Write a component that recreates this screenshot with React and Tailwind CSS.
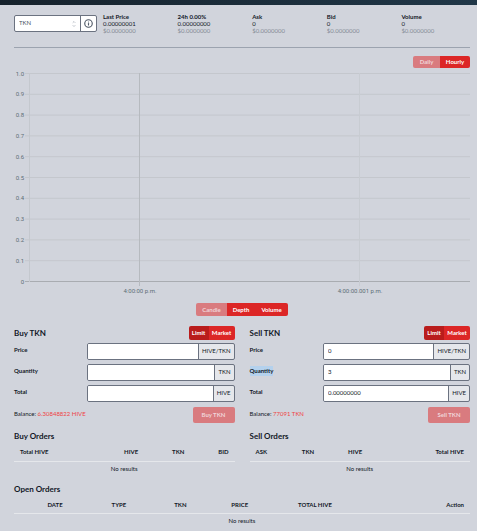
import React, { useState } from 'react';
import { ChevronDown, ChevronUp, Info } from 'lucide-react';

const stats = [
  { label: 'Last Price', value: '0.00000001', usd: '$0.0000000' },
  { label: '24h 0.00%', value: '0.00000000', usd: '$0.0000000' },
  { label: 'Ask', value: '0', usd: '$0.0000000' },
  { label: 'Bid', value: '0', usd: '$0.0000000' },
  { label: 'Volume', value: '0', usd: '$0.0000000' },
];

const yTicks = ['1.0', '0.9', '0.8', '0.7', '0.6', '0.5', '0.4', '0.3', '0.2', '0.1', '0'];

const Chart = () => (
  <svg viewBox="0 0 456 228" className="block h-auto w-full" role="img" aria-label="Market depth">
    {yTicks.map((tick, i) => {
      const y = 5.5 + i * 20.8;
      return (
        <g key={tick}>
          <line x1="11" x2="456" y1={y} y2={y} stroke={tick === '0' ? '#a9acb1' : '#c4c7cd'} />
          <text x="10" y={y + 2} textAnchor="end" fill="#5d6e76" className="font-['Roboto',sans-serif] text-[6px]">{tick}</text>
        </g>
      );
    })}
    <line x1="15.5" x2="15.5" y1="5" y2="214" stroke="#c4c8ce" />
    <line x1="125.5" x2="125.5" y1="5" y2="218" stroke="#b6babf" />
    <line x1="345.5" x2="345.5" y1="5" y2="218" stroke="#c8ccd2" />
    <text x="126" y="225" textAnchor="middle" fill="#5d6e76" className="font-['Roboto',sans-serif] text-[6px]">4:00:00 p.m.</text>
    <text x="346" y="225" textAnchor="middle" fill="#5d6e76" className="font-['Roboto',sans-serif] text-[6px]">4:00:00.001 p.m.</text>
  </svg>
);

const Field = ({ id, label, unit, value, selected }) => (
  <div className="flex h-[17px] items-stretch">
    <div className="w-1/3 pt-[2px]">
      <label htmlFor={id} className={`inline-block h-[10px] font-bold leading-[10px] ${selected ? 'bg-[#b4d1ed]' : ''}`}>{label}</label>
    </div>
    <div className="flex min-w-0 flex-1 overflow-hidden rounded-[2px] border border-[#6b7280] bg-[#e5e7eb]">
      <input id={id} type="text" defaultValue={value} className="min-w-0 flex-1 border-r border-[#6b7280] bg-white px-1 pb-[2px] outline-none" />
      <span className="px-[3px] leading-[13px]">{unit}</span>
    </div>
  </div>
);

const OrderForm = ({ side, balance, price, quantity, total, selected }) => {
  const key = side.toLowerCase();
  return (
    <form className="text-[6px]" onSubmit={e => e.preventDefault()}>
      <div className="flex h-[14px] items-center justify-between">
        <h2 className="text-[8px] font-bold leading-[14px]">{side} TKN</h2>
        <div className="flex h-[14px] overflow-hidden rounded-[2px] font-bold text-white">
          <button type="button" className="w-5 bg-[#b91c1c] pb-px">Limit</button>
          <button type="button" className="w-[26px] bg-[#dc2626] pb-px">Market</button>
        </div>
      </div>
      <div className="mt-[3px] flex flex-col gap-1">
        <Field id={`${key}-price`} label="Price" unit="HIVE/TKN" value={price} />
        <Field id={`${key}-quantity`} label="Quantity" unit="TKN" value={quantity} selected={selected} />
        <Field id={`${key}-total`} label="Total" unit="HIVE" value={total} />
      </div>
      <div className="mt-[5px] flex h-4 justify-between">
        <p className="leading-[14px]">Balance: <a href="#balance" className="text-[#ef4444]">{balance}</a></p>
        <button type="submit" disabled className="w-[42px] rounded-[2px] bg-[#d97b7f] pb-px font-bold text-[#f0d5d9]">{side} TKN</button>
      </div>
    </form>
  );
};

const OrderTable = ({ title, columns }) => (
  <section className="text-[6px]">
    <h2 className="text-[8px] font-bold leading-[12px]">{title}</h2>
    <table className="w-full table-fixed">
      <thead>
        <tr className="h-[19px] border-b border-[#e5e7eb]">
          {columns.map(([name, style]) => (
            <th key={name} className={`whitespace-nowrap px-[6px] pb-0 pt-[2px] font-bold leading-[16px] ${style}`}>{name}</th>
          ))}
        </tr>
      </thead>
      <tbody>
        <tr>
          <td colSpan={columns.length} className="p-0 text-center leading-[13px]">No results</td>
        </tr>
      </tbody>
    </table>
  </section>
);

const buyColumns = [
  ['Total HIVE', 'text-left'],
  ['HIVE', 'w-[21%] text-right'],
  ['TKN', 'w-[21%] text-right'],
  ['BID', 'w-[20%] text-right'],
];

const sellColumns = [
  ['ASK', 'w-[21%] text-left'],
  ['TKN', 'w-[21%] text-left'],
  ['HIVE', 'w-[21%] text-left'],
  ['Total HIVE', 'text-right'],
];

const openColumns = [
  ['DATE', 'w-[18%] text-center'],
  ['TYPE', 'w-[10%] text-center'],
  ['TKN', 'w-[17%] text-center'],
  ['PRICE', 'w-[9%] text-center'],
  ['TOTAL HIVE', 'w-[24%] text-center'],
  ['Action', 'text-right'],
];

const App = () => {
  const [token, setToken] = useState('TKN');

  return (
    <div className="min-h-screen bg-[#d1d4dc] font-['Lato',sans-serif] text-[#111827]">
      <header className="h-[5px] bg-linear-to-r from-[#16222c] to-[#203748]" />
      <main className="pl-[14px] pr-[7px] pt-[8px]">
        <div className="flex h-[35px] gap-[6px] border-b border-[#9ca3af]">
          <div className="mt-[2px] flex h-[17px] w-[83px] shrink-0 overflow-hidden rounded-[2px] border border-[#6b7280] bg-white">
            <div className="relative flex-1">
              <select
                aria-label="Token"
                value={token}
                onChange={e => setToken(e.target.value)}
                className="block h-[13px] w-full appearance-none px-1 py-0 text-[6px] leading-[13px] text-[#4b5563] outline-none"
              >
                <option>TKN</option>
              </select>
              <span className="pointer-events-none absolute inset-y-0 right-1 flex flex-col justify-center text-[#9ca3af]">
                <ChevronUp size={4} strokeWidth={4} />
                <ChevronDown size={4} strokeWidth={4} />
              </span>
            </div>
            <button type="button" aria-label="Token info" className="flex w-4 items-center justify-center border-l border-[#6b7280] text-[#4b5563]">
              <Info size={9} strokeWidth={3} />
            </button>
          </div>
          <dl className="-mr-[6px] grid flex-1 grid-cols-5 text-[6px] leading-[7px]">
            {stats.map(stat => (
              <div key={stat.label}>
                <dt className="font-bold">{stat.label}</dt>
                <dd>{stat.value}</dd>
                <dd className="text-[#858b96]">{stat.usd}</dd>
              </div>
            ))}
          </dl>
        </div>

        <div className="mt-2 flex justify-end">
          <div className="flex h-3 overflow-hidden rounded-[2px] text-[6px] font-bold">
            <button type="button" disabled className="w-[27px] bg-[#d97b7f] pb-px text-[#f0d5d9]">Daily</button>
            <button type="button" className="w-[30px] bg-[#dc2626] pb-px text-white">Hourly</button>
          </div>
        </div>
        <Chart />
        <div className="mt-[7px] flex justify-center">
          <div className="flex h-[13px] overflow-hidden rounded-[2px] text-[6px] font-bold text-white">
            <button type="button" disabled className="w-[31px] bg-[#d97b7f] pb-px text-[#f0d5d9]">Candle</button>
            <button type="button" className="w-[28px] bg-[#dc2626] pb-px">Depth</button>
            <button type="button" className="w-[33px] bg-[#dc2626] pb-px">Volume</button>
          </div>
        </div>

        <div className="mt-[10px] grid grid-cols-2 gap-x-[15px] gap-y-[7px]">
          <OrderForm side="Buy" balance="6.30848822 HIVE" price="" quantity="" total="" />
          <OrderForm side="Sell" balance="77091 TKN" price="0" quantity="3" total="0.00000000" selected />
          <OrderTable title="Buy Orders" columns={buyColumns} />
          <OrderTable title="Sell Orders" columns={sellColumns} />
        </div>
        <div className="mt-2">
          <OrderTable title="Open Orders" columns={openColumns} />
        </div>
      </main>
    </div>
  );
};

export default App;
